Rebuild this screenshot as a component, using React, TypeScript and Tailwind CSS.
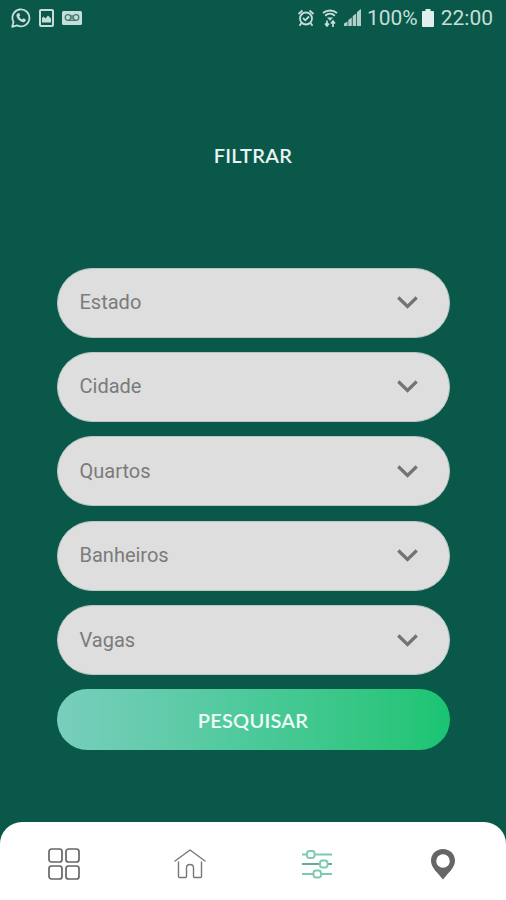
const fields = ["Estado", "Cidade", "Quartos", "Banheiros", "Vagas"];

function StatusBar() {
  return (
    <div className="flex h-9 items-center justify-between pl-[11px] pr-[13px] text-[#c5ded8]">
      <div className="flex items-center">
        <svg width="20" height="20" viewBox="0 0 20 20" fill="none">
          <path d="M1.2 18.8 2.5 14A8.5 8.5 0 1 1 6 17.4Z" stroke="currentColor" strokeWidth="1.8" strokeLinejoin="round" />
          <path d="M6.8 5.2 8.2 5l1 2.5-1 1.2c.7 1.3 1.7 2.2 3 2.8l1.2-1.2 2.4 1.2c.1 1.8-1.1 2.9-2.8 2.7-3.3-.5-6.3-3.6-6.6-6.6 0-1 .6-1.9 1.4-2.4Z" fill="currentColor" />
        </svg>
        <svg className="ml-[8px]" width="15" height="18" viewBox="0 0 15 18" fill="none">
          <rect x="1" y="1" width="13" height="16" rx="1" stroke="currentColor" strokeWidth="2" />
          <path d="M3 13.500V9l1.500-1.500 2 2 2.500-3 3 3v4Z" fill="currentColor" />
        </svg>
        <svg className="ml-[8px]" width="20" height="14" viewBox="0 0 20 14" fill="none">
          <rect width="20" height="14" rx="1.5" fill="currentColor" />
          <g stroke="#427a6e" strokeWidth="1.3">
            <circle cx="6" cy="6.5" r="2.8" />
            <circle cx="14" cy="6.5" r="2.8" />
            <path d="M6 9.3h8M10 4v4" />
          </g>
        </svg>
      </div>
      <div className="flex items-center font-[Roboto,sans-serif] text-[21px] leading-none">
        <svg width="18" height="18" viewBox="0 0 18 18" fill="none" stroke="currentColor" strokeWidth="1.8">
          <circle cx="9" cy="9.5" r="6" />
          <path d="m1.5 5 4-3.5M16.5 5l-4-3.5M4.500 14l-2 2.800M13.500 14l2 2.800M6 9l2.300 2.300L12 7.500" />
        </svg>
        <svg className="ml-[7px]" width="16" height="19" viewBox="0 0 16 19" fill="none" stroke="currentColor" strokeWidth="1.9">
          <path d="M1 4C5 .7 11 .7 15 4M3.2 6.700C6 4 10 4 12.800 6.700" />
          <path d="M5.500 8.700h5L8 11.500Z" fill="currentColor" strokeWidth=".5" />
          <path d="M5 11.500V17M3 14.500l2 2.500 2-2.500M11 18v-6M9 14.500l2-2.500 2 2.500" strokeWidth="1.700" />
        </svg>
        <svg className="ml-[6px]" width="18" height="18" viewBox="0 0 18 18" fill="currentColor">
          <path d="M0 17v-2.500l3.500-2v4.500ZM4.300 17v-6l3.500-2.500V17ZM8.700 17V7l3.500-2.500V17ZM13 17V3l4-3v17Z" opacity=".9" />
        </svg>
        <span className="ml-[5px] mr-px">100%</span>
        <svg className="ml-[3px]" width="12" height="18" viewBox="0 0 12 18" fill="#e0efeb">
          <path d="M3.500 0h5v2H11a1 1 0 0 1 1 1v14a1 1 0 0 1-1 1H1a1 1 0 0 1-1-1V3a1 1 0 0 1 1-1h2.500Z" />
        </svg>
        <span className="ml-[7px]">22:00</span>
      </div>
    </div>
  );
}

function SelectField({ label }: { label: string }) {
  return (
    <button className="flex h-[70px] w-full shrink-0 items-center justify-between rounded-[35px] border border-[#b9c6c1] bg-[#dedede] pl-[22px] pr-[31px] font-[Roboto,sans-serif] text-[20px] text-[#7b7b7b]">
      <span className="pb-px">{label}</span>
      <svg width="21" height="13" viewBox="0 0 21 13" fill="none" stroke="#737373" strokeWidth="3.200">
        <path d="m1.300 1.500 9.200 9 9.200-9" />
      </svg>
    </button>
  );
}

function BottomNav() {
  return (
    <nav className="grid h-[78px] grid-cols-4 items-center justify-items-center rounded-t-[22px] bg-white pt-[6px] pl-px">
      <svg width="32" height="32" viewBox="0 0 32 32" fill="none" stroke="#666" strokeWidth="1.700">
        <rect x="1" y="1" width="13" height="13" rx="2.500" />
        <rect x="18" y="1" width="13" height="13" rx="2.500" />
        <rect x="1" y="18" width="13" height="13" rx="2.500" />
        <rect x="18" y="18" width="13" height="13" rx="2.500" />
      </svg>
      <svg width="32" height="32" viewBox="0 0 32 32" fill="none" stroke="#777" strokeWidth="1.400" strokeLinecap="round" strokeLinejoin="round">
        <path d="M1 13 16 2l15 11M4.500 14v14.500q0 1 1 1h6q1 0 1-1V20q0-3.500 3.500-3.500t3.500 3.500v8.500q0 1 1 1h6q1 0 1-1V14" />
      </svg>
      <svg width="32" height="32" viewBox="0 0 32 32" fill="none" stroke="#7bcbb3" strokeWidth="1.900">
        <path d="M1 6.500h5M14 6.500h17M1 26h11.500M20 26h11" />
        <path d="M1 16h17.500M26.500 16H31" stroke="#68aa98" />
        <rect x="6" y="3" width="7.500" height="7" rx="2.500" />
        <rect x="19" y="12.500" width="7.500" height="7" rx="2.500" />
        <rect x="12.500" y="22.500" width="7.500" height="7" rx="2.500" />
      </svg>
      <svg width="26" height="32" viewBox="0 0 26 32" fill="#666">
        <path fillRule="evenodd" d="M13 1C6.200 1 1 6 1 12.500 1 20 8 25 13 31.500 18 25 25 20 25 12.500 25 6 19.800 1 13 1Zm0 5.200a6.800 6.800 0 1 1 0 13.600 6.800 6.800 0 0 1 0-13.600Z" />
      </svg>
    </nav>
  );
}

export default function App() {
  return (
    <div className="flex h-[900px] w-[506px] flex-col overflow-hidden bg-[#09584a]">
      <StatusBar />
      <main className="flex flex-1 flex-col px-[56.500px]">
        <h1 className="mt-[104px] text-center font-[Lato,sans-serif] text-[20px] leading-[30px] font-semibold tracking-[0.300px] text-[#eaf5f1]">FILTRAR</h1>
        <div className="mt-[97.500px] flex flex-col gap-[14.400px]">
          {fields.map((label) => (
            <SelectField key={label} label={label} />
          ))}
          <button className="h-[61px] rounded-full bg-linear-to-r from-[#78cebd] via-[#4bc99a] to-[#19c471] font-[Lato,sans-serif] text-[20px] font-semibold tracking-[0.250px] text-[#effcf7]">
            PESQUISAR
          </button>
        </div>
      </main>
      <BottomNav />
    </div>
  );
}
